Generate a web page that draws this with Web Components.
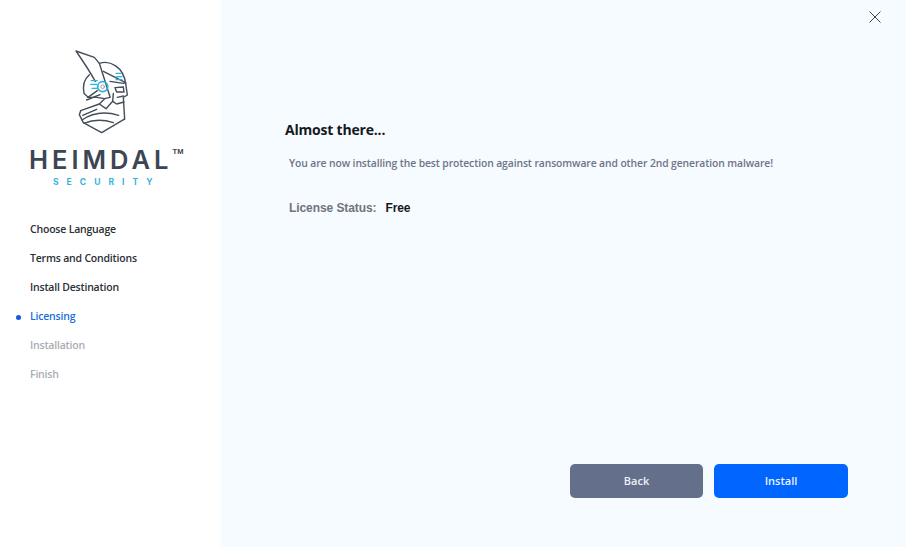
<!DOCTYPE html>
<html><head><meta charset="utf-8"><style>
html,body{margin:0;padding:0;height:100%}
body{width:906px;height:547px;overflow:hidden;font-family:"Open Sans","Noto Sans",sans-serif}
hs-app{display:flex;width:906px;height:547px}
</style></head><body>
<hs-app>
  <hs-sidebar slot="side">
    <hs-logo></hs-logo>
    <hs-step state="done">Choose Language</hs-step>
    <hs-step state="done">Terms and Conditions</hs-step>
    <hs-step state="done">Install Destination</hs-step>
    <hs-step state="active">Licensing</hs-step>
    <hs-step state="todo">Installation</hs-step>
    <hs-step state="todo">Finish</hs-step>
  </hs-sidebar>
  <hs-main>
    <hs-close></hs-close>
    <h-title>Almost there...</h-title>
    <h-desc>You are now installing the best protection against ransomware and other 2nd generation malware!</h-desc>
    <hs-license value="Free">License Status:</hs-license>
    <hs-actions>
      <hs-button kind="back">Back</hs-button>
      <hs-button kind="primary">Install</hs-button>
    </hs-actions>
  </hs-main>
</hs-app>
<script>
function def(name, css, html){
  customElements.define(name, class extends HTMLElement{
    constructor(){super();const r=this.attachShadow({mode:'open'});
      r.innerHTML='<style>'+css+'</style>'+(typeof html==='function'?html(this):html);}
  });
}
def('hs-app',':host{display:flex;width:906px;height:547px}','<slot name="side"></slot><slot></slot>');
def('hs-sidebar',':host{display:flex;flex-direction:column;width:221px;height:547px;background:#fff;padding-top:40px;box-sizing:border-box;flex:none}','<slot></slot>');
def('hs-logo',`:host{display:flex;flex-direction:column;height:175px;flex:none;padding-left:29px}
svg{display:block;margin-left:31px;width:90px;height:100px;flex:none}
.row{display:flex;align-items:flex-start;margin-top:7px;height:26px}
.name{font:600 25.5px/26px Inter,sans-serif;letter-spacing:4px;margin-right:-2px;color:#3c4652;white-space:nowrap}
.tm{font:700 7.5px/9px "Liberation Sans",sans-serif;letter-spacing:.2px;color:#3c4652;margin-left:2px}
.sec{margin:3px 0 0 24px;font:700 8.5px/12px Inter,sans-serif;letter-spacing:8.05px;color:#37b4da;white-space:nowrap}`,
`<svg viewBox="0 0 270 300" fill="none" stroke="#434e59" stroke-width="4.2" stroke-linejoin="round" stroke-linecap="round">
<path d="M48 33 L103 52 L118 70 L150 170 M48 33 C68 62 88 92 106 124"/>
<path d="M118 70 C150 60 190 80 197 130"/>
<path d="M130 94 L197 128 L190 130 L150 124"/>
<path d="M88 104 C72 118 68 140 72 160 L84 172"/>
<path d="M84 172 L112 152 M80 180 L120 164"/>
<path d="M165 143 L190 141 L192 156 L170 156 Z"/>
<path d="M197 130 L202 165 L190 172 L194 238"/>
<path d="M160 160 L158 184 L170 192 L192 186"/>
<path d="M172 172 L190 168"/>
<path d="M84 172 L110 172 L134 176 L150 172 M134 176 L118 192 L62 212"/>
<path d="M62 212 L58 224 L70 248 L125 278 L192 238"/>
<path d="M118 192 L138 206 L158 184"/>
<path d="M66 240 C92 222 130 212 176 226"/>
<path d="M68 226 L110 208"/>
<path d="M72 250 C100 238 130 238 160 248"/>
<g stroke="#2bb3e0"><circle cx="128" cy="140" r="15" stroke-width="5.4"/>
<path d="M94 122 H112 M92 133 H110 M96 145 H110 M168 100 H184 M170 110 H186 M168 119 H186" stroke-width="3.6"/></g>
<circle cx="128" cy="140" r="5.5" stroke="#a78a8a" stroke-width="2.6"/>
</svg>
<div class="row"><div class="name">HEIMDAL</div><div class="tm">TM</div></div>
<div class="sec">SECURITY</div>`);
def('hs-step',`:host{display:flex;align-items:center;height:29px;flex:none;padding-left:30px;position:relative;font:600 10.5px/29px "Open Sans",sans-serif;color:#2b2f36;white-space:nowrap;letter-spacing:-.2px}
:host([state=active]){color:#1c6fe0}
:host([state=active])::before{content:"";position:absolute;left:16px;top:13px;width:5px;height:5px;border-radius:50%;background:#1858d8}
:host([state=todo]){color:#a9adb3}`,'<slot></slot>');
def('hs-main',`:host{flex:1;display:flex;flex-direction:column;height:547px;background:#f6fbff;position:relative;box-sizing:border-box;padding:122px 58px 49px 64px}`,'<slot></slot>');
def('hs-close',`:host{position:absolute;top:10px;right:24px;width:14px;height:14px}svg{display:block}`,
`<svg width="14" height="14" viewBox="0 0 14 14" stroke="#3c4450" stroke-width="1" fill="none"><path d="M1.5 1.5L12.5 12.5M12.5 1.5L1.5 12.5"/></svg>`);
def('h-title',`:host{display:block;font:700 14px/16px "Open Sans",sans-serif;color:#16181d;letter-spacing:-.2px}`,'<slot></slot>');
def('h-desc',`:host{display:block;margin:17px 0 0 4px;font:600 10.35px/16px "Open Sans",sans-serif;color:#6e7488;white-space:nowrap;letter-spacing:-.1px}`,'<slot></slot>');
def('hs-license',`:host{display:flex;margin:29px 0 0 4px;font:700 12px/16px "Liberation Sans",sans-serif;color:#6f7480;white-space:nowrap;letter-spacing:-.08px}
b{color:#16181d;margin-left:9px;font-weight:700;letter-spacing:-.1px}`,
h=>`<slot></slot><b>${h.getAttribute('value')}</b>`);
def('hs-actions',`:host{display:flex;justify-content:flex-end;gap:11px;margin-top:auto}`,'<slot></slot>');
def('hs-button',`:host{display:flex;align-items:center;justify-content:center;width:134px;height:34px;border-radius:5px;background:#0066ff;color:#eaf2ff;font:600 11px/34px "Open Sans",sans-serif}
:host([kind=back]){width:133px;background:#646f8c;color:#f0f1f5}`,'<slot></slot>');
</script>
</body></html>
